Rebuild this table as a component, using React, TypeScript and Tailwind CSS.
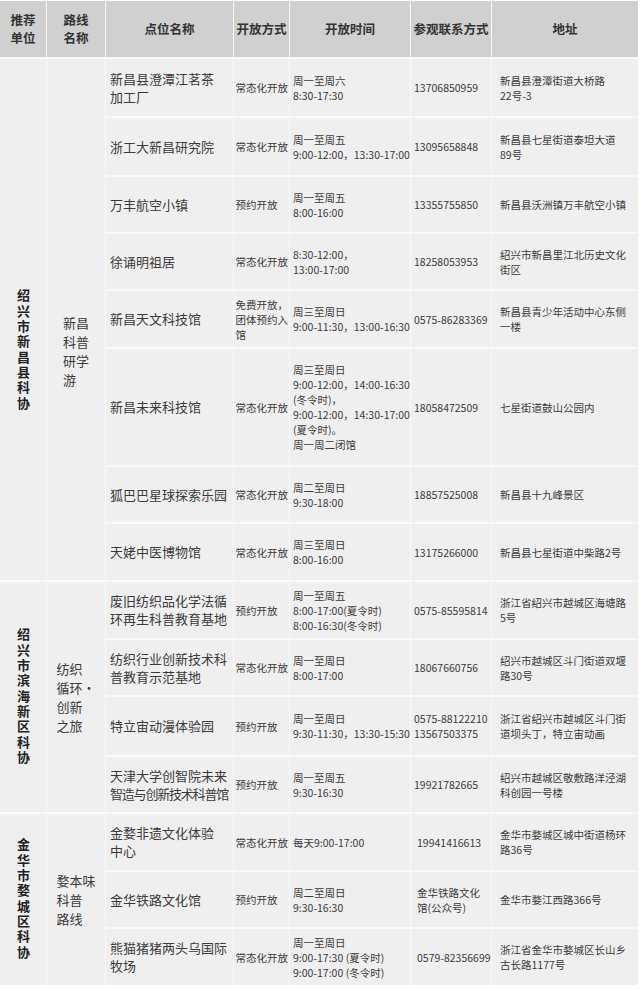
import React from 'react'

type Row = {
  name: string[]
  mode: string[]
  time: string[]
  contact: string[]
  addr: string[]
}

type Group = {
  unit: string
  route: string[]
  offset?: boolean
  contactPad?: boolean
  rows: Row[]
}

const GROUPS: Group[] = [
  {
    unit: '绍兴市新昌县科协',
    route: ['新昌', '科普', '研学', '游'],
    offset: true,
    rows: [
      { name: ['新昌县澄潭江茗茶', '加工厂'], mode: ['常态化开放'], time: ['周一至周六', '8:30-17:30'], contact: ['13706850959'], addr: ['新昌县澄潭街道大桥路', '22号-3'] },
      { name: ['浙工大新昌研究院'], mode: ['常态化开放'], time: ['周一至周五', '9:00-12:00，13:30-17:00'], contact: ['13095658848'], addr: ['新昌县七星街道泰坦大道', '89号'] },
      { name: ['万丰航空小镇'], mode: ['预约开放'], time: ['周一至周五', '8:00-16:00'], contact: ['13355755850'], addr: ['新昌县沃洲镇万丰航空小镇'] },
      { name: ['徐诵明祖居'], mode: ['常态化开放'], time: ['8:30-12:00，', '13:00-17:00'], contact: ['18258053953'], addr: ['绍兴市新昌里江北历史文化', '街区'] },
      { name: ['新昌天文科技馆'], mode: ['免费开放，', '团体预约入', '馆'], time: ['周三至周日', '9:00-11:30，13:00-16:30'], contact: ['0575-86283369'], addr: ['新昌县青少年活动中心东侧', '一楼'] },
      {
        name: ['新昌未来科技馆'],
        mode: ['常态化开放'],
        time: ['周三至周日', '9:00-12:00，14:00-16:30', '(冬令时)，', '9:00-12:00，14:30-17:00', '(夏令时)。', '周一周二闭馆'],
        contact: ['18058472509'],
        addr: ['七星街道鼓山公园内'],
      },
      { name: ['狐巴巴星球探索乐园'], mode: ['常态化开放'], time: ['周二至周日', '9:30-18:00'], contact: ['18857525008'], addr: ['新昌县十九峰景区'] },
      { name: ['天姥中医博物馆'], mode: ['常态化开放'], time: ['周三至周日', '8:00-16:00'], contact: ['13175266000'], addr: ['新昌县七星街道中柴路2号'] },
    ],
  },
  {
    unit: '绍兴市滨海新区科协',
    route: ['纺织', '循环·', '创新', '之旅'],
    rows: [
      { name: ['废旧纺织品化学法循', '环再生科普教育基地'], mode: ['预约开放'], time: ['周一至周五', '8:00-17:00(夏令时)', '8:00-16:30(冬令时)'], contact: ['0575-85595814'], addr: ['浙江省绍兴市越城区海塘路', '5号'] },
      { name: ['纺织行业创新技术科', '普教育示范基地'], mode: ['常态化开放'], time: ['周一至周日', '8:00-17:00'], contact: ['18067660756'], addr: ['绍兴市越城区斗门街道双堰', '路30号'] },
      { name: ['特立宙动漫体验园'], mode: ['预约开放'], time: ['周一至周日', '9:30-11:30，13:30-15:30'], contact: ['0575-88122210', '13567503375'], addr: ['浙江省绍兴市越城区斗门街', '道坝头丁，特立宙动画'] },
      { name: ['天津大学创智院未来', '智造与创新技术科普馆'], mode: ['预约开放'], time: ['周一至周五', '9:30-16:30'], contact: ['19921782665'], addr: ['绍兴市越城区敬敷路洋泾湖', '科创园一号楼'] },
    ],
  },
  {
    unit: '金华市婺城区科协',
    route: ['婺本味', '科普', '路线'],
    contactPad: true,
    rows: [
      { name: ['金婺非遗文化体验', '中心'], mode: ['常态化开放'], time: ['每天9:00-17:00'], contact: ['19941416613'], addr: ['金华市婺城区城中街道杨环', '路36号'] },
      { name: ['金华铁路文化馆'], mode: ['预约开放'], time: ['周二至周日', '9:30-16:30'], contact: ['金华铁路文化', '馆(公众号)'], addr: ['金华市婺江西路366号'] },
      { name: ['熊猫猪猪两头乌国际', '牧场'], mode: ['常态化开放'], time: ['周一至周日', '9:00-17:30 (夏令时)', '9:00-17:00 (冬令时)'], contact: ['0579-82356699'], addr: ['浙江省金华市婺城区长山乡', '古长路1177号'] },
    ],
  },
]

function Lines({ lines, squeeze }: { lines: string[]; squeeze?: boolean }) {
  return (
    <div>
      {lines.map((l, i) => (
        <div key={i} className={squeeze && l.length > 9 ? 'whitespace-nowrap tracking-[-1.2px]' : 'whitespace-nowrap'}>
          {l}
        </div>
      ))}
    </div>
  )
}

const cell = 'bg-[#efefef] flex items-center overflow-hidden'
const head = 'bg-[#d0d0d0] flex items-center justify-center text-center font-bold text-[12.5px] leading-[18px] text-[#333]'

export default function App() {
  return (
    <div className="w-[640px] h-[990px] bg-white pt-px font-['Noto_Sans_CJK_SC',sans-serif] text-[#3a3a3a]">
      <div className="grid w-[638px] grid-cols-[46px_58px_127px_55px_120px_80px_146px] grid-rows-[56px_57px_57px_55px_55px_56px_116px_55px_56px_56px_55px_58px_55px_56px_55px_56px] gap-x-px gap-y-[2px] bg-[#f9f9f9]">
        <div className={head}>推荐<br />单位</div>
        <div className={head}>路线<br />名称</div>
        <div className={head}>点位名称</div>
        <div className={head}>开放方式</div>
        <div className={head}>开放时间</div>
        <div className={head}>参观联系方式</div>
        <div className={head}>地址</div>

        {GROUPS.map((g) => (
          <React.Fragment key={g.unit}>
            <div
              className={`${cell} justify-center ${g.offset ? 'pt-[62px]' : ''}`}
              style={{ gridRow: `span ${g.rows.length}` }}
            >
              <div className="[writing-mode:vertical-rl] font-bold text-[13px] leading-[16px] tracking-[2.3px] text-[#222]">
                {g.unit}
              </div>
            </div>
            <div
              className={`${cell} justify-center text-[13px] leading-[19px] ${g.offset ? 'pt-[62px]' : ''}`}
              style={{ gridRow: `span ${g.rows.length}` }}
            >
              <Lines lines={g.route} />
            </div>
            {g.rows.map((r, i) => (
              <React.Fragment key={i}>
                <div className={`${cell} pl-[4px] text-[13px] leading-[18px]`}>
                  <Lines lines={r.name} squeeze />
                </div>
                <div className={`${cell} pl-[1.5px] text-[10.5px] leading-[15px]`}>
                  <Lines lines={r.mode} />
                </div>
                <div className={`${cell} pl-[3px] text-[10.5px] leading-[15px]`}>
                  <Lines lines={r.time} />
                </div>
                <div className={`${cell} ${g.contactPad ? 'pl-[6px]' : 'pl-[3px]'} text-[10.5px] leading-[15px]`}>
                  <Lines lines={r.contact} />
                </div>
                <div className={`${cell} pl-[8px] text-[10.5px] leading-[15px]`}>
                  <Lines lines={r.addr} />
                </div>
              </React.Fragment>
            ))}
          </React.Fragment>
        ))}
      </div>
    </div>
  )
}
